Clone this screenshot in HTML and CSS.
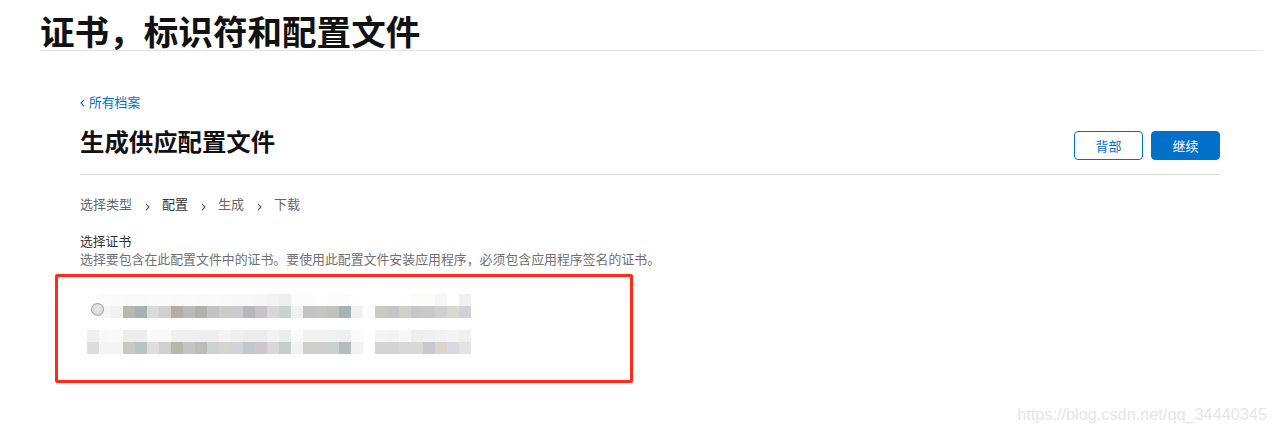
FILE: index.html
```html
<!DOCTYPE html>
<html lang="zh-CN">
<head>
<meta charset="utf-8">
<title>证书，标识符和配置文件</title>
<link rel="stylesheet" href="styles.css">
</head>
<body>
<header class="page-header">
  <h1 class="page-title">证书，标识符和配置文件</h1>
</header>
<main class="content">
  <a class="back-link" href="#">
    <svg class="back-chev" width="5" height="8" viewBox="0 0 5 8"><polyline points="4,0.8 1,4 4,7.2" fill="none" stroke="#0070c9" stroke-width="1.1"/></svg>
    <span>所有档案</span>
  </a>
  <div class="title-row">
    <h2 class="section-title">生成供应配置文件</h2>
    <div class="actions">
      <button class="btn btn-outline" type="button">背部</button>
      <button class="btn btn-primary" type="button">继续</button>
    </div>
  </div>
  <nav class="steps">
    <span class="step">选择类型</span>
    <svg class="step-chev" width="5" height="8" viewBox="0 0 5 8"><polyline points="1,0.8 4,4 1,7.2" fill="none" stroke="#555" stroke-width="1.1"/></svg>
    <span class="step step-current">配置</span>
    <svg class="step-chev" width="5" height="8" viewBox="0 0 5 8"><polyline points="1,0.8 4,4 1,7.2" fill="none" stroke="#555" stroke-width="1.1"/></svg>
    <span class="step">生成</span>
    <svg class="step-chev" width="5" height="8" viewBox="0 0 5 8"><polyline points="1,0.8 4,4 1,7.2" fill="none" stroke="#555" stroke-width="1.1"/></svg>
    <span class="step">下载</span>
  </nav>
  <div class="field-label">选择证书</div>
  <div class="field-desc">选择要包含在此配置文件中的证书。要使用此配置文件安装应用程序，必须包含应用程序签名的证书。</div>
  <div class="highlight-box">
    <div class="mosaic">
      <div class="mos-row mos-a"></div>
      <div class="mos-row mos-b"></div>
      <div class="mos-gap"></div>
      <div class="mos-row mos-c"></div>
      <div class="mos-row mos-d"></div>
      <span class="radio"></span>
    </div>
  </div>
</main>
<div class="watermark">https://blog.csdn.net/qq_34440345</div>
</body>
</html>
```

FILE: styles.css
```css
* { box-sizing: border-box; }
html, body { margin: 0; padding: 0; }
body {
  background: #fff;
  font-family: "Noto Sans CJK SC", "Noto Sans", sans-serif;
  color: #333;
  width: 1277px;
  height: 434px;
  position: relative;
  overflow: hidden;
}
.page-header {
  margin: 0 15px 0 40px;
  padding-top: 10px;
  border-bottom: 1px solid #e3e3e3;
}
.page-title {
  margin: 0;
  font-size: 34.6px;
  line-height: 40px;
  font-weight: 700;
  color: #111;
  letter-spacing: 0;
}
.content {
  margin-left: 80px;
  width: 1140px;
}
.back-link {
  display: flex;
  align-items: center;
  gap: 4px;
  margin-top: 42px;
  height: 18px;
  font-size: 12.8px;
  line-height: 18px;
  color: #0070c9;
  text-decoration: none;
}
.back-chev { display: block; margin-top: 2px; }
.title-row {
  display: flex;
  justify-content: space-between;
  align-items: flex-start;
  margin-top: 15px;
  height: 49px;
  border-bottom: 1px solid #d8d8d8;
}
.section-title {
  margin: 0;
  font-size: 24.4px;
  line-height: 30px;
  font-weight: 700;
  color: #111;
}
.actions {
  display: flex;
  gap: 8px;
  margin-top: 5px;
}
.btn {
  width: 69px;
  height: 29px;
  border-radius: 4px;
  font-family: inherit;
  font-size: 13px;
  line-height: 27px;
  padding: 0;
  cursor: pointer;
}
.btn-outline {
  background: #fff;
  border: 1px solid #0070c9;
  color: #0070c9;
}
.btn-primary {
  background: #0070c9;
  border: 1px solid #0070c9;
  color: #fff;
}
.steps {
  display: flex;
  align-items: center;
  margin-top: 19px;
  height: 20px;
  font-size: 13px;
  line-height: 20px;
}
.step { color: #666; }
.step-current { color: #333; }
.step-chev { display: block; margin: 6px 12px 0 13px; }
.field-label {
  margin-top: 18px;
  font-size: 12.8px;
  line-height: 18px;
  color: #333;
}
.field-desc {
  font-size: 12.9px;
  line-height: 18px;
  color: #707070;
  white-space: nowrap;
}
.highlight-box {
  margin: 6px 0 0 -25px;
  width: 578px;
  height: 109px;
  border: 3px solid #ff2a1a;
  border-radius: 2px;
  padding: 17px 0 0 29px;
}
.mosaic {
  position: relative;
  width: 384px;
}
.mos-row { height: 12px; width: 384px; }
.mos-gap { height: 12px; }
.mos-a {
  background: linear-gradient(to right,
    #fff 0 12px, #fbfbfa 12px 24px, #fafafa 24px 36px, #f9f9f8 36px 48px,
    #f9f9f9 48px 60px, #fafafa 60px 72px, #fafafa 72px 84px, #f9f9f9 84px 96px,
    #fafafa 96px 108px, #f9f9f9 108px 120px, #fafafa 120px 132px, #f9f9f9 132px 144px,
    #f8f8f8 144px 156px, #f8f8f8 156px 168px, #f6f6f6 168px 180px, #f2f2f2 180px 192px,
    #eeeeee 192px 204px, #fcfcfc 204px 216px, #fcfcfc 216px 228px, #fdfdfd 228px 240px,
    #fcfcfc 240px 252px, #fcfcfc 252px 264px, #fefefe 264px 276px, #fff 276px 288px,
    #fff 288px 300px, #fff 300px 312px, #fefefe 312px 324px, #fbfbfa 324px 336px,
    #fbfbfa 336px 348px, #f6f6f6 348px 360px, #fff 360px 372px, #f0f0f0 372px 384px);
}
.mos-b {
  background: linear-gradient(to right,
    #fff 0 12px, #f5f5f3 12px 24px, #f1f1ef 24px 36px, #b8b8b3 36px 48px,
    #a9b1b3 48px 60px, #d9dbd9 60px 72px, #d0d0ce 72px 84px, #b1ada8 84px 96px,
    #bababa 96px 108px, #b0b0ae 108px 120px, #bfc3c3 120px 132px, #cdcbc6 132px 144px,
    #c9cbcf 144px 156px, #b5b9b9 156px 168px, #c8c3c8 168px 180px, #d8d8d8 180px 192px,
    #ccd0d0 192px 204px, #f0f0f0 204px 216px, #c4c2c4 216px 228px, #c4c4c4 228px 240px,
    #c0c2c0 240px 252px, #a8b2b0 252px 264px, #f0f0f0 264px 276px, #fff 276px 288px,
    #ccc9c5 288px 300px, #c4c6c8 300px 312px, #cfcfcc 312px 324px, #c6c8c8 324px 336px,
    #c8caca 336px 348px, #ccd0cf 348px 360px, #d8d8d4 360px 372px, #d4d0d8 372px 384px);
}
.mos-c {
  background: linear-gradient(to right,
    #f0f0f0 0 12px, #f8f8f8 12px 24px, #fafafa 24px 36px, #eceeec 36px 48px,
    #eceeee 48px 60px, #fafafa 60px 72px, #fafafa 72px 84px, #f0f0f0 84px 96px,
    #f0f0f0 96px 108px, #eeeeee 108px 120px, #eeeeee 120px 132px, #f4f4f2 132px 144px,
    #f0f0f0 144px 156px, #ececec 156px 168px, #ececec 168px 180px, #f2f2f2 180px 192px,
    #eceeee 192px 204px, #fafafa 204px 216px, #f2f2f2 216px 228px, #f2f2f2 228px 240px,
    #f0f2f0 240px 252px, #eef0ef 252px 264px, #fbfbfb 264px 276px, #fff 276px 288px,
    #f4f4f4 288px 300px, #f2f3f5 300px 312px, #f8f8f6 312px 324px, #eeeeee 324px 336px,
    #f0f0f0 336px 348px, #f2f2f2 348px 360px, #f4f4f4 360px 372px, #f0f0f0 372px 384px);
}
.mos-d {
  background: linear-gradient(to right,
    #dcdcdc 0 12px, #f4f4f4 12px 24px, #f4f4f4 24px 36px, #c8c8c3 36px 48px,
    #b9c3c3 48px 60px, #dcdedc 60px 72px, #d0d0d0 72px 84px, #b9b5b0 84px 96px,
    #c3c5c5 96px 108px, #bcbcb9 108px 120px, #cdd1d1 120px 132px, #d6d4d0 132px 144px,
    #d0d2d6 144px 156px, #c3c7c7 156px 168px, #ccc8cc 168px 180px, #d8d8d8 180px 192px,
    #c8cccc 192px 204px, #f2f2f2 204px 216px, #cfcfcd 216px 228px, #cfcfcd 228px 240px,
    #cbcfcd 240px 252px, #b4bcbc 252px 264px, #f2f2f2 264px 276px, #fff 276px 288px,
    #d4d4d4 288px 300px, #d4d4d4 300px 312px, #d8d8d6 312px 324px, #d8d8d5 324px 336px,
    #c8c9cc 336px 348px, #d8d5d0 348px 360px, #d8dadf 360px 372px, #e2e4e4 372px 384px);
}
.radio {
  position: absolute;
  left: 4px;
  top: 9px;
  width: 13px;
  height: 13px;
  border-radius: 50%;
  border: 1px solid #a0a0a0;
  background: radial-gradient(circle at 50% 40%, #e8e8e8, #d4d4d4);
}
.watermark {
  position: absolute;
  right: 10px;
  bottom: 10px;
  font-family: "Liberation Sans", Arial, sans-serif;
  font-size: 16.3px;
  line-height: 20px;
  color: #e6e6e6;
}
```
